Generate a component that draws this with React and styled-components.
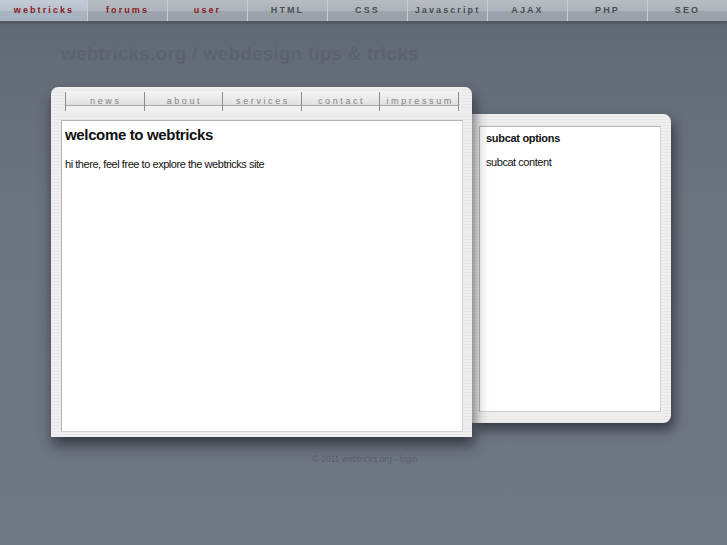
import React from 'react'
import styled, { createGlobalStyle } from 'styled-components'

const GlobalStyle = createGlobalStyle`
  html, body {
    margin: 0;
    padding: 0;
  }
  body {
    min-height: 545px;
    background: linear-gradient(#5d656f 0, #646c77 60px, #6a737e 200px, #6f7783 545px);
    font-family: "Liberation Sans", Arial, sans-serif;
  }
`

const TopNav = styled.div`
  display: flex;
  height: 21px;
  border-bottom: 1px solid #545b64;
  box-shadow: 0 1px 2px rgba(0, 0, 0, 0.25);
`

const NavTab = styled.a`
  width: ${props => props.$width || 80}px;
  box-sizing: border-box;
  display: flex;
  align-items: center;
  justify-content: center;
  padding-bottom: 1px;
  border-left: 1px solid ${props => props.$first ? 'transparent' : '#c9ced3'};
  background: ${props => props.$active
    ? 'linear-gradient(#c3ccd6 0, #b6c1cc 50%, #a9b5c1 51%, #a6b2be 100%)'
    : 'linear-gradient(#b7bdc3 0, #aeb4bb 50%, #9da4ac 51%, #99a0a8 100%)'};
  color: ${props => props.$red ? '#8a1a1f' : '#4a4f55'};
  font-size: 9px;
  font-weight: bold;
  letter-spacing: 2.1px;
  text-decoration: none;
`

const Wrap = styled.div`
  padding-left: 51px;
`

const SiteTitle = styled.h1`
  margin: 21px 0 0 10px;
  font-size: 19px;
  line-height: 22px;
  letter-spacing: 0.15px;
  font-weight: bold;
  color: #5b636d;
`

const Columns = styled.div`
  display: flex;
  align-items: flex-start;
  margin-top: 22px;
`

const MainPanel = styled.div`
  position: relative;
  z-index: 2;
  width: 421px;
  height: 350px;
  box-sizing: border-box;
  padding: 5px 9px 5px 10px;
  border-radius: 7px 7px 0 0;
  background:
    repeating-linear-gradient(#efefef 0, #efefef 2px, #e7e7e7 2px, #e7e7e7 3px);
  box-shadow: 2px 8px 14px rgba(20, 24, 30, 0.65);
  display: flex;
  flex-direction: column;
`

const TabStrip = styled.div`
  display: flex;
  width: 393px;
  margin-left: 4px;
  border-right: 1px solid #8c8c8c;
`

const SubTab = styled.a`
  flex: 1;
  height: 19px;
  border-left: 1px solid #8c8c8c;
  background: linear-gradient(#f4f4f4 0, #e2e2e2 12px, #d8d8d8 13px, #a9a9a9 13px, #a9a9a9 14px, #f0f0f0 14px);
  color: #848484;
  font-size: 9px;
  line-height: 18px;
  letter-spacing: 2.6px;
  text-align: center;
  text-decoration: none;
  padding-left: 2px;
`

const ContentBox = styled.div`
  margin-top: 9px;
  flex: 1;
  background: #fff;
  border: 1px solid #b4b4b4;
  border-right-color: #d0d0d0;
  border-bottom-color: #cfcfcf;
  padding: 5px 3px;
  color: #111;
`

const Heading = styled.h2`
  margin: 0;
  font-size: 15px;
  line-height: 18px;
  letter-spacing: -0.35px;
  font-weight: bold;
`

const Text = styled.p`
  margin: ${props => props.$top || 16}px 0 0;
  font-size: 11px;
  line-height: 14px;
  letter-spacing: -0.45px;
`

const SidePanel = styled.div`
  position: relative;
  z-index: 1;
  margin-top: 27px;
  width: 199px;
  height: 309px;
  box-sizing: border-box;
  padding: 12px 10px 11px 7px;
  border-radius: 0 8px 8px 0;
  background:
    repeating-linear-gradient(#efefef 0, #efefef 2px, #e7e7e7 2px, #e7e7e7 3px);
  box-shadow: 3px 7px 12px rgba(20, 24, 30, 0.6);
  display: flex;
`

const SideBox = styled.div`
  flex: 1;
  background: #fff;
  border: 1px solid #b8b8b8;
  border-right-color: #d0d0d0;
  border-bottom-color: #cfcfcf;
  padding: 4px 6px;
  color: #111;
`

const SideHeading = styled.h3`
  margin: 0;
  font-size: 11px;
  line-height: 14px;
  letter-spacing: -0.3px;
  font-weight: bold;
`

const Footer = styled.div`
  width: 628px;
  margin-top: 17px;
  text-align: center;
  font-size: 8.5px;
  color: #59606a;
`

const topLinks = [
  { label: 'webtricks', red: true, active: true, width: 87 },
  { label: 'forums', red: true },
  { label: 'user', red: true },
  { label: 'HTML' },
  { label: 'CSS' },
  { label: 'Javascript' },
  { label: 'AJAX' },
  { label: 'PHP' },
  { label: 'SEO' },
]

const subLinks = ['news', 'about', 'services', 'contact', 'impressum']

const App = () => {
  return (
    <>
      <GlobalStyle />
      <TopNav>
        {topLinks.map((l, i) => (
          <NavTab key={l.label} href="#" $first={i === 0} $width={l.width} $red={l.red} $active={l.active}>
            {l.label}
          </NavTab>
        ))}
      </TopNav>
      <Wrap>
        <SiteTitle>webtricks.org / webdesign tips &amp; tricks</SiteTitle>
        <Columns>
          <MainPanel>
            <TabStrip>
              {subLinks.map(s => <SubTab key={s} href="#">{s}</SubTab>)}
            </TabStrip>
            <ContentBox>
              <Heading>welcome to webtricks</Heading>
              <Text $top={13}>hi there, feel free to explore the webtricks site</Text>
            </ContentBox>
          </MainPanel>
          <SidePanel>
            <SideBox>
              <SideHeading>subcat options</SideHeading>
              <Text $top={10}>subcat content</Text>
            </SideBox>
          </SidePanel>
        </Columns>
        <Footer>© 2011 webtricks.org - login</Footer>
      </Wrap>
    </>
  )
}

export default App
